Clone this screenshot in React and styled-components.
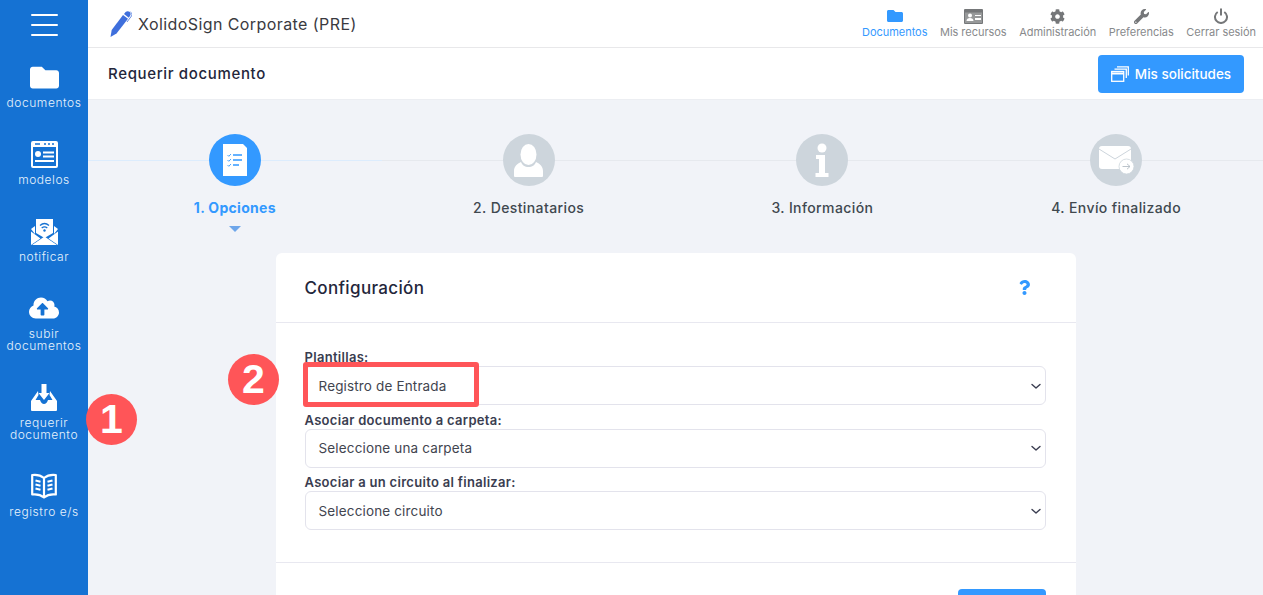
import React from "react";
import styled, { createGlobalStyle } from "styled-components";
import { FaFolder, FaCog, FaWrench, FaCloudUploadAlt, FaQuestion } from "react-icons/fa";

const Global = createGlobalStyle`
  html, body { margin: 0; padding: 0; height: 595px; overflow: hidden; }
  body { font-family: Inter, "Liberation Sans", sans-serif; background: #f1f3f8; }
  * { box-sizing: border-box; }
`;

const Page = styled.div`
  display: flex;
  width: 1263px;
  height: 595px;
  overflow: hidden;
  position: relative;
`;
const Sidebar = styled.aside`
  width: 88px;
  flex: none;
  background: #1572d3;
  color: #fff;
  display: flex;
  flex-direction: column;
  align-items: center;
`;
const Burger = styled.div`
  height: 62px;
  padding-top: 14px;
  display: flex;
  flex-direction: column;
  gap: 8px;
  span { display: block; width: 27px; height: 2px; background: #fff; border-radius: 1px; }
`;
const SideItem = styled.div`
  width: 100%;
  display: flex;
  flex-direction: column;
  align-items: center;
  margin-bottom: 30px;
`;
const SideIcon = styled.div`
  height: 30px;
  margin-bottom: 5px;
  display: flex;
  align-items: center;
  justify-content: center;
`;
const SideLabel = styled.div`
  font-size: 12px;
  line-height: 12px;
  font-weight: 300;
  letter-spacing: 0.55px;
  text-align: center;
  color: #e8f2fc;
`;
const Main = styled.main`
  flex: 1;
  min-width: 0;
  display: flex;
  flex-direction: column;
`;
const TopBar = styled.header`
  height: 48px;
  flex: none;
  background: #fff;
  border-bottom: 1px solid #e8e8ea;
  display: flex;
  align-items: center;
  justify-content: space-between;
  padding: 0 7px 0 22px;
`;
const Brand = styled.div`
  display: flex;
  align-items: center;
  gap: 6px;
`;
const BrandName = styled.span`
  font-size: 16px;
  color: #3a3a3f;
  letter-spacing: 0.42px;
`;
const Nav = styled.nav`
  display: flex;
  gap: 12.5px;
  padding-bottom: 2px;
`;
const NavItem = styled.div`
  display: flex;
  flex-direction: column;
  align-items: center;
  color: ${(p) => (p.$active ? "#3399ff" : "#888a8c")};
  font-size: 11px;
  line-height: 12px;
  letter-spacing: -0.03px;
  white-space: nowrap;
`;
const NavIcon = styled.div`
  height: 18px;
  margin-bottom: 1px;
  display: flex;
  align-items: center;
  justify-content: center;
  color: ${(p) => (p.$active ? "#3399ff" : "#757779")};
`;
const SubBar = styled.div`
  height: 52px;
  flex: none;
  background: #fff;
  border-bottom: 1px solid #eceef2;
  display: flex;
  align-items: center;
  justify-content: space-between;
  padding: 0 19px 0 20px;
`;
const SubTitle = styled.h1`
  margin: 0;
  font-size: 15px;
  font-weight: 500;
  color: #23263b;
  letter-spacing: 0.65px;
`;
const BlueButton = styled.button`
  width: ${(p) => p.$w}px;
  height: 38px;
  flex: none;
  border: 0;
  border-radius: 4px;
  background: #3399ff;
  color: #fff;
  font: 500 13.5px Inter, "Liberation Sans", sans-serif;
  display: flex;
  align-items: center;
  justify-content: center;
  gap: 6px;
  padding: 0;
`;
const Content = styled.div`
  flex: 1;
  min-height: 0;
  display: flex;
  flex-direction: column;
  align-items: center;
`;
const Stepper = styled.div`
  width: 100%;
  display: grid;
  grid-template-columns: repeat(4, 1fr);
  padding-top: 34px;
`;
const Step = styled.div`
  position: relative;
  display: flex;
  flex-direction: column;
  align-items: center;
  height: 119px;
  &::before {
    content: "";
    position: absolute;
    left: 0;
    right: 0;
    top: 26px;
    height: 1px;
    background: ${(p) => (p.$active ? "#dcecfd" : "#e6e9ee")};
  }
`;
const StepCircle = styled.div`
  position: relative;
  width: 52px;
  height: 52px;
  border-radius: 50%;
  background: ${(p) => (p.$active ? "#3399ff" : "#cdd5dc")};
  color: #fff;
  display: flex;
  align-items: center;
  justify-content: center;
`;
const StepLabel = styled.div`
  margin-top: 13px;
  font-size: 14px;
  line-height: 18px;
  font-weight: ${(p) => (p.$active ? 700 : 500)};
  color: ${(p) => (p.$active ? "#3399ff" : "#40484f")};
  letter-spacing: ${(p) => (p.$active ? 0.3 : 0.4)}px;
  white-space: nowrap;
`;
const Caret = styled.div`
  margin-top: 9px;
  width: 0;
  height: 0;
  border-left: 6px solid transparent;
  border-right: 6px solid transparent;
  border-top: 6px solid #6ea6ea;
`;
const Card = styled.section`
  width: 800px;
  flex: none;
  background: #fff;
  border-radius: 6px 6px 0 0;
`;
const CardHead = styled.div`
  height: 70px;
  border-bottom: 1px solid #e8e8f0;
  display: flex;
  align-items: center;
  justify-content: space-between;
  padding: 0 44px 0 29px;
  color: #3399ff;
`;
const CardTitle = styled.h2`
  margin: 0;
  font-size: 17px;
  font-weight: 500;
  color: #23263b;
  letter-spacing: 0.35px;
`;
const CardBody = styled.div`
  height: 240px;
  padding: 26px 30px 0 29px;
  border-bottom: 1px solid #e8e8f0;
  display: flex;
  flex-direction: column;
`;
const FieldLabel = styled.label`
  font-size: 13px;
  line-height: 17px;
  font-weight: 600;
  color: #3a3d50;
  letter-spacing: 0.3px;
  margin-top: ${(p) => (p.$first ? 0 : 6.5)}px;
`;
const Select = styled.div`
  height: 39px;
  flex: none;
  border: 1px solid #e3e3ec;
  border-radius: 6px;
  background: #fff;
  display: flex;
  align-items: center;
  justify-content: space-between;
  padding: 0 1px 0 13px;
  font-size: 13.5px;
  color: #42454f;
  letter-spacing: 0.15px;
`;
const CardFoot = styled.div`
  padding: 26px 30px 0;
  display: flex;
  justify-content: flex-end;
`;
const Badge = styled.div`
  position: absolute;
  left: ${(p) => p.$x}px;
  top: ${(p) => p.$y}px;
  width: 51px;
  height: 51px;
  border-radius: 50%;
  background: #ff5558;
  color: #fff;
  font: 700 41px/51px "Liberation Sans", sans-serif;
  text-align: center;
`;
const Highlight = styled.div`
  position: absolute;
  left: 303px;
  top: 362px;
  width: 176px;
  height: 45px;
  border: 5px solid #ff5558;
  border-radius: 3px;
`;

const Pen = () => (
  <svg width="22" height="26" viewBox="0 0 22 26" fill="#3f6fdc">
    <path d="M.5 26l1.200-7L13 4l5 3.800L6.500 22.500z" />
    <path d="M14 3l1.600-2c1-1 2.800-1.200 4-.2s1.400 2.700.5 3.900L18.800 6.700z" />
    <path d="M20.500 1c1.600 1 2 2.600 1 4l-4.500 6" fill="none" stroke="#3f6fdc" strokeWidth=".8" />
  </svg>
);
const IdCardSmall = () => (
  <svg width="19" height="15" viewBox="0 0 19 15">
    <path d="M1 0h17a1 1 0 011 1v13a1 1 0 01-1 1H1a1 1 0 01-1-1V1a1 1 0 011-1z" fill="currentColor" />
    <rect x="1" y="3.500" width="17" height="10.500" fill="#fff" opacity=".25" />
    <circle cx="6" cy="6.500" r="2" fill="#fff" />
    <path d="M2.500 12c0-2 1.500-3 3.500-3s3.500 1 3.500 3z" fill="#fff" />
    <path d="M11 6h6v1h-6zM11 9h6v2h-6z" fill="#fff" />
  </svg>
);
const Power = () => (
  <svg width="14" height="16" viewBox="0 0 14 16" fill="none" stroke="currentColor" strokeWidth="2">
    <path d="M3.700 4A6 6 0 1010.300 4" />
    <path d="M7 .5v7" />
  </svg>
);
const WindowCard = () => (
  <svg width="27" height="27" viewBox="0 0 27 27" fill="#fff">
    <path fillRule="evenodd" d="M2 0h23a2 2 0 012 2v23a2 2 0 01-2 2H2a2 2 0 01-2-2V2a2 2 0 012-2zM2 6v19h23V6z" />
    <path d="M4 2.200h5v1.600H4zM13 2.200h2v1.600h-2zM17 2.200h2v1.600h-2zM21 2.200h2v1.600h-2z" fill="#1572d3" />
    <circle cx="7" cy="13" r="3" />
    <path d="M12 10.500h11v2H12zM12 14.500h11v2H12zM4 19h19v2H4z" />
  </svg>
);
const MailWifi = () => (
  <svg width="27" height="27" viewBox="0 0 27 27" fill="#fff">
    <path d="M0 11l4-3v8zM27 11l-4-3v8zM0 13.500l9.500 7L0 27zM27 13.500l-9.500 7L27 27z" />
    <path d="M1 27l12.500-8.500L26 27z" />
    <path fillRule="evenodd" d="M5 1h17v14l-8.500 5L5 15z" />
    <path d="M9 7.500c3-2.600 6-2.600 9 0M10.700 10c2-1.700 3.600-1.700 5.600 0" fill="none" stroke="#1572d3" strokeWidth="1.300" />
    <circle cx="13.500" cy="12.500" r="1.200" fill="#1572d3" />
  </svg>
);
const InboxDown = () => (
  <svg width="26" height="27" viewBox="0 0 26 27" fill="#fff">
    <path d="M10.500 0h5v9H18.500L13 16 7.500 9h3z" />
    <path d="M7 7L0 17v9a1 1 0 001 1h24a1 1 0 001-1v-9L19 7l-.5 4 3 5H17c-1 2.500-2.200 4-4 4s-3-1.500-4-4H4.500l3-5z" />
  </svg>
);
const Book = () => (
  <svg width="26" height="26" viewBox="0 0 26 26" fill="none" stroke="#fff">
    <path d="M13 5C10 2.500 5 1.500 1.200 2v19.500c4-.5 8.800.5 11.800 3 3-2.500 7.800-3.500 11.800-3V2C21 1.500 16 2.500 13 5zM13 5v19.500" strokeWidth="2.200" strokeLinejoin="round" />
    <path d="M4.500 7.500l5 1.200M4.500 11.500l5 1.200M4.500 15.500l5 1.200M21.500 7.500l-5 1.200M21.500 11.500l-5 1.200M21.500 15.500l-5 1.200" strokeWidth="2.200" />
  </svg>
);
const ChecklistDoc = () => (
  <svg width="24" height="32" viewBox="0 0 24 32">
    <path d="M0 0h20l4 4v28H0z" fill="#fff" />
    <g fill="none" stroke="#3399ff">
      <path d="M4.500 11l1.300 1.300L8 10M4.500 16l1.300 1.300L8 15M4.500 21l1.300 1.300L8 20" strokeWidth=".9" />
      <path d="M10 11h9M10 16h9M10 21h6" strokeWidth="1.300" />
    </g>
  </svg>
);
const Person = () => (
  <svg width="29" height="33" viewBox="0 0 29 33" fill="#fff">
    <path d="M7 18C8 21 11 23 14.500 23S21 21 22 18c4 1.500 7 5 7 9v5a1 1 0 01-1 1H1a1 1 0 01-1-1v-5c0-4 3-7.500 7-9z" />
    <ellipse cx="14.500" cy="10.500" rx="8" ry="10.500" />
  </svg>
);
const InfoGlyph = () => (
  <svg width="14" height="34" viewBox="0 0 14 34" fill="#fff">
    <circle cx="7" cy="5" r="4.500" />
    <path d="M1 12h9v18h3.500v4H.5v-4h3.500V16H1z" />
  </svg>
);
const MailSend = () => (
  <svg width="36" height="30" viewBox="0 0 36 30">
    <rect x="1" y="1" width="32" height="23" rx="3" fill="#fff" />
    <path d="M1 4l16 10L33 4" fill="none" stroke="#cdd5dc" strokeWidth="1" />
    <circle cx="28.500" cy="21.500" r="7.500" fill="#fff" stroke="#cdd5dc" strokeWidth=".8" />
    <path d="M24.500 21.500h7.500M29 18.800l3 2.700-3 2.700" fill="none" stroke="#b4bdc5" strokeWidth=".9" />
  </svg>
);
const Windows = () => (
  <svg width="18" height="16" viewBox="0 0 18 16" fill="none" stroke="#fff" strokeWidth="1.300">
    <rect x=".7" y="5.500" width="12" height="9.800" />
    <path d="M.7 7.500h12" strokeWidth="2" />
    <path d="M3.500 3.200h11.800v8.800M6 .8h11.300v8.700" />
  </svg>
);
const Chevron = () => (
  <svg width="16" height="16" viewBox="0 0 16 16" fill="none" stroke="#3a3d50" strokeWidth="1.400" strokeLinecap="round" strokeLinejoin="round">
    <path d="M4 6.500l4 3.500 4-3.500" />
  </svg>
);

const navItems = [
  { label: "Documentos", icon: <FaFolder size={16} />, active: true },
  { label: "Mis recursos", icon: <IdCardSmall /> },
  { label: "Administración", icon: <FaCog size={15} /> },
  { label: "Preferencias", icon: <FaWrench size={15} /> },
  { label: "Cerrar sesión", icon: <Power /> },
];
const sideItems = [
  { label: ["documentos"], icon: <FaFolder size={29} /> },
  { label: ["modelos"], icon: <WindowCard /> },
  { label: ["notificar"], icon: <MailWifi /> },
  { label: ["subir", "documentos"], icon: <FaCloudUploadAlt size={30} /> },
  { label: ["requerir", "documento"], icon: <InboxDown /> },
  { label: ["registro e/s"], icon: <Book /> },
];
const steps = [
  { label: "1. Opciones", icon: <ChecklistDoc />, active: true },
  { label: "2. Destinatarios", icon: <Person /> },
  { label: "3. Información", icon: <InfoGlyph /> },
  { label: "4. Envío finalizado", icon: <MailSend /> },
];
const fields = [
  { label: "Plantillas:", value: "Registro de Entrada" },
  { label: "Asociar documento a carpeta:", value: "Seleccione una carpeta" },
  { label: "Asociar a un circuito al finalizar:", value: "Seleccione circuito" },
];

export default function App() {
  return (
    <Page>
      <Global />
      <Sidebar>
        <Burger><span /><span /><span /></Burger>
        {sideItems.map((s) => (
          <SideItem key={s.label[0]}>
            <SideIcon>{s.icon}</SideIcon>
            <SideLabel>
              {s.label.map((l, i) => (
                <React.Fragment key={l}>{i > 0 && <br />}{l}</React.Fragment>
              ))}
            </SideLabel>
          </SideItem>
        ))}
      </Sidebar>
      <Main>
        <TopBar>
          <Brand>
            <Pen />
            <BrandName>XolidoSign Corporate (PRE)</BrandName>
          </Brand>
          <Nav>
            {navItems.map((n) => (
              <NavItem key={n.label} $active={n.active}>
                <NavIcon $active={n.active}>{n.icon}</NavIcon>
                {n.label}
              </NavItem>
            ))}
          </Nav>
        </TopBar>
        <SubBar>
          <SubTitle>Requerir documento</SubTitle>
          <BlueButton $w={146}><Windows />Mis solicitudes</BlueButton>
        </SubBar>
        <Content>
          <Stepper>
            {steps.map((s) => (
              <Step key={s.label} $active={s.active}>
                <StepCircle $active={s.active}>{s.icon}</StepCircle>
                <StepLabel $active={s.active}>{s.label}</StepLabel>
                {s.active && <Caret />}
              </Step>
            ))}
          </Stepper>
          <Card>
            <CardHead>
              <CardTitle>Configuración</CardTitle>
              <FaQuestion size={15} />
            </CardHead>
            <CardBody>
              {fields.map((f, i) => (
                <React.Fragment key={f.label}>
                  <FieldLabel $first={i === 0}>{f.label}</FieldLabel>
                  <Select>
                    {f.value}
                    <Chevron />
                  </Select>
                </React.Fragment>
              ))}
            </CardBody>
            <CardFoot>
              <BlueButton $w={88} aria-label="Siguiente" />
            </CardFoot>
          </Card>
        </Content>
      </Main>
      <Badge $x={86} $y={394}>1</Badge>
      <Badge $x={228} $y={354}>2</Badge>
      <Highlight />
    </Page>
  );
}
